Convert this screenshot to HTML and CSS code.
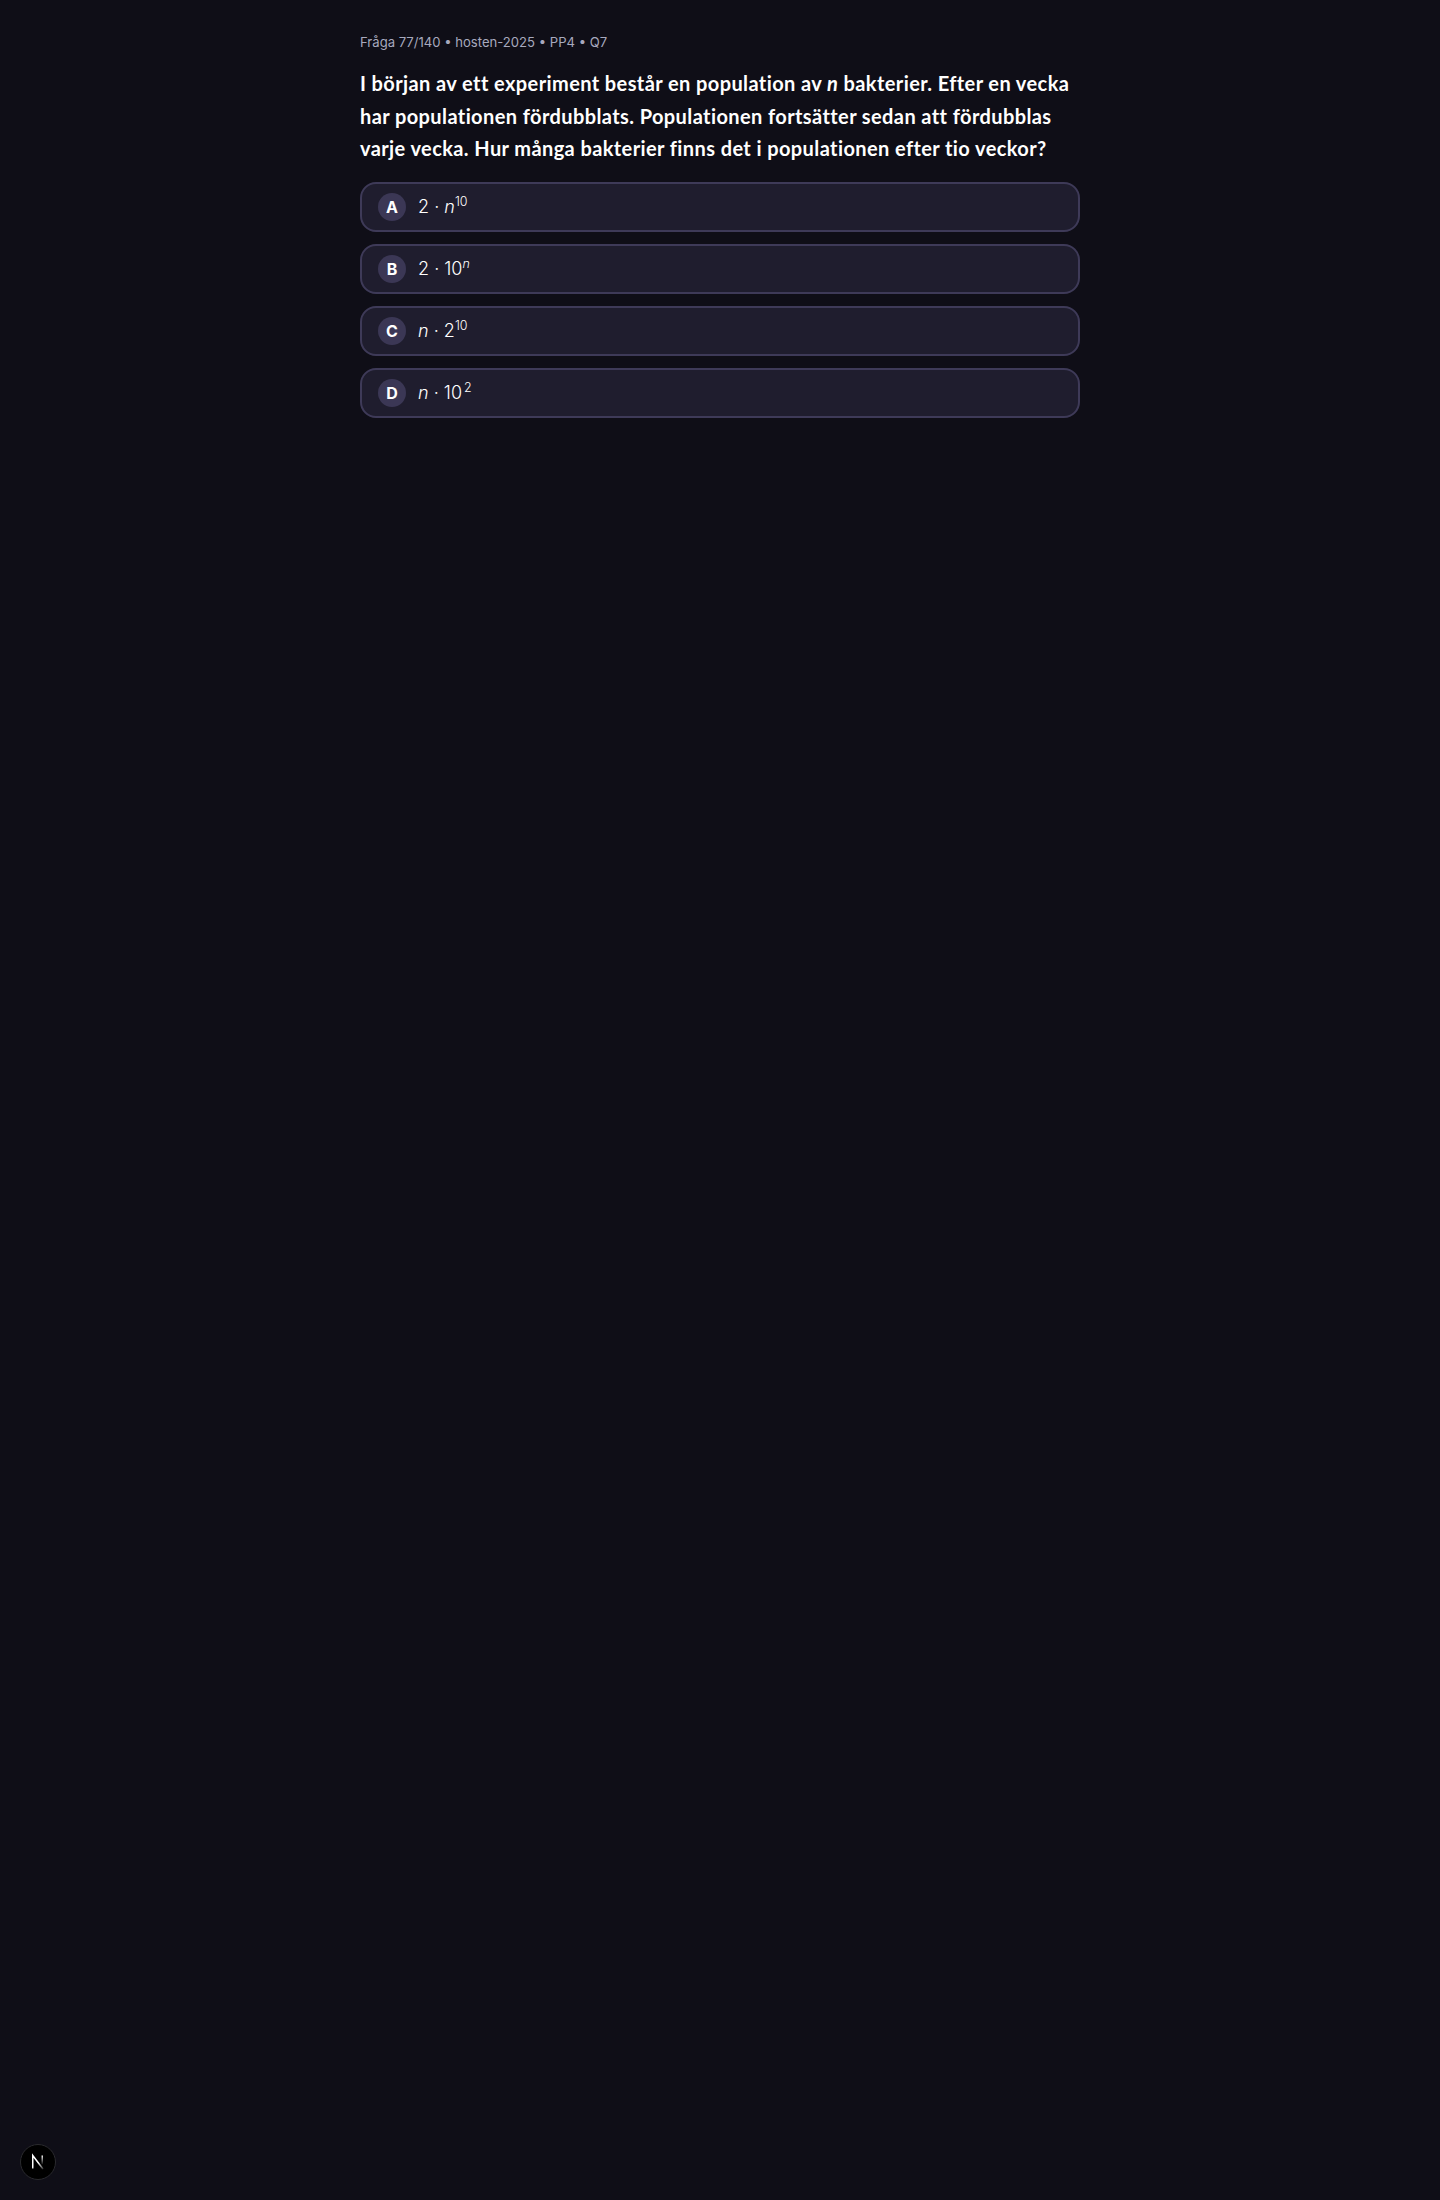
FILE: index.html
```html
<!DOCTYPE html>
<html lang="sv">
<head>
<meta charset="utf-8">
<title>Fråga 77/140</title>
<link rel="stylesheet" href="styles.css">
</head>
<body>
<main class="page">
  <p class="meta">Fråga 77/140 • hosten-2025 • PP4 • Q7</p>
  <h1 class="question">I början av ett experiment består en population av <i>n</i> bakterier. Efter en vecka har populationen fördubblats. Populationen fortsätter sedan att fördubblas varje vecka. Hur många bakterier finns det i populationen efter tio veckor?</h1>
  <div class="options">
    <button class="option"><span class="letter">A</span><span class="math">2 <span class="dot">·</span> <i>n</i><sup>10</sup></span></button>
    <button class="option"><span class="letter">B</span><span class="math">2 <span class="dot">·</span> 10<sup><i>n</i></sup></span></button>
    <button class="option"><span class="letter">C</span><span class="math"><i>n</i> <span class="dot">·</span> 2<sup>10</sup></span></button>
    <button class="option"><span class="letter">D</span><span class="math"><i>n</i> <span class="dot">·</span> 10<sup class="sq">2</sup></span></button>
  </div>
</main>
<div class="devtool">
  <svg class="devlogo" viewBox="0 0 18 18" width="18" height="18" aria-hidden="true">
    <defs>
      <linearGradient id="nDiag" x1="4" y1="2" x2="14" y2="16" gradientUnits="userSpaceOnUse">
        <stop offset="0.55" stop-color="#fff"/>
        <stop offset="1" stop-color="#fff" stop-opacity="0.2"/>
      </linearGradient>
      <linearGradient id="nStem" x1="13" y1="2" x2="13" y2="12" gradientUnits="userSpaceOnUse">
        <stop offset="0" stop-color="#fff"/>
        <stop offset="1" stop-color="#fff" stop-opacity="0"/>
      </linearGradient>
    </defs>
    <path d="M3.75 15.5V2.5L14 16" fill="none" stroke="url(#nDiag)" stroke-width="1.5"/>
    <path d="M13.25 2.5v9" fill="none" stroke="url(#nStem)" stroke-width="1.5"/>
  </svg>
</div>
</body>
</html>
```
FILE: styles.css
```css
* { box-sizing: border-box; }
html, body { margin: 0; padding: 0; }
body {
  min-height: 2200px;
  background: #0f0e17;
  color: #fff;
  font-family: "Inter", "Noto Sans", sans-serif;
}
.page {
  width: 720px;
  margin: 0 auto;
  padding-top: 32px;
}
.meta {
  margin: 0;
  font-size: 13.1px;
  line-height: 20px;
  color: #a7a9be;
}
.question {
  margin: 15px 0 0;
  font-family: "Lato", "Noto Sans", sans-serif;
  font-size: 20px;
  line-height: 32.5px;
  font-weight: 700;
  letter-spacing: 0.4px;
  color: #fff;
}
.options {
  display: flex;
  flex-direction: column;
  gap: 12px;
  margin-top: 17px;
}
.option {
  display: flex;
  align-items: center;
  gap: 12px;
  width: 100%;
  height: 50px;
  padding: 0 16px;
  background: #1f1d2e;
  border: 2px solid #3e3a58;
  border-radius: 16px;
  color: #fff;
  font: inherit;
  text-align: left;
}
.letter {
  display: flex;
  align-items: center;
  justify-content: center;
  width: 28px;
  height: 28px;
  border-radius: 50%;
  background: #3b3755;
  font-size: 16px;
  font-weight: 700;
}
.math {
  font-size: 18px;
  line-height: 28px;
  font-weight: 300;
  white-space: nowrap;
}
sup {
  font-size: 12.5px;
  line-height: 0;
  vertical-align: 7px;
}
.sq { margin-left: 2px; }
.devtool {
  position: fixed;
  left: 20px;
  bottom: 20px;
  display: flex;
  align-items: center;
  justify-content: center;
  width: 36px;
  height: 36px;
  border-radius: 50%;
  background: #000;
  border: 1px solid #2a2a2e;
}
```
